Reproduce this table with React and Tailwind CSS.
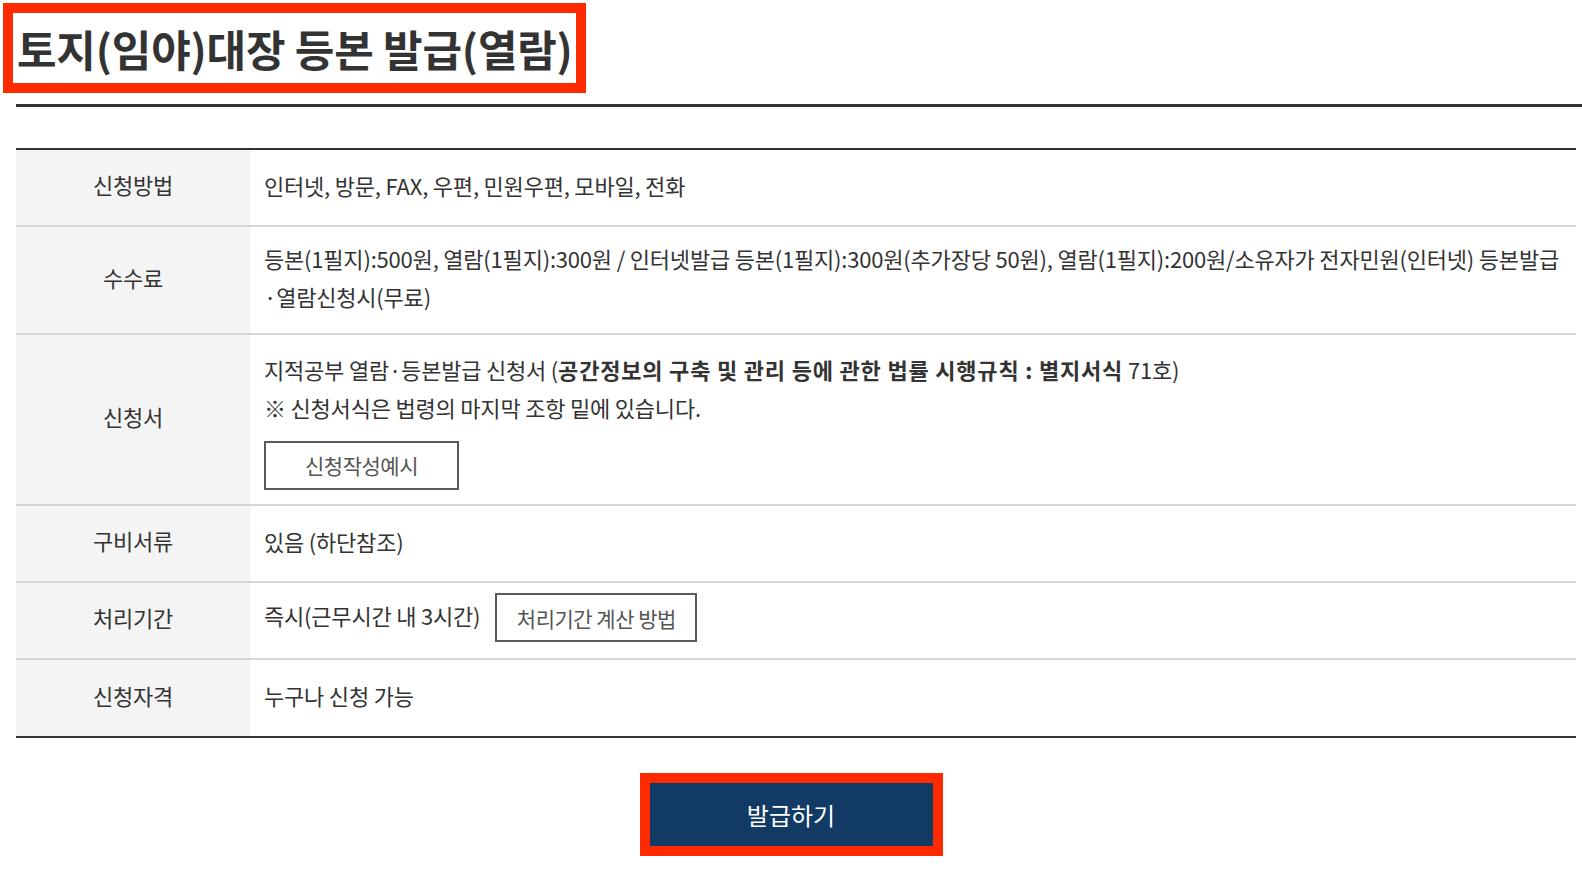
import React from "react";

function Row({ label, h, children, last, pb = "pb-[6px]" }) {
  return (
    <div className={`flex ${h} ${last ? "" : "border-b-2 border-[#d6d6d6]"}`}>
      <div className="w-[234px] shrink-0 bg-[#f4f4f4] flex items-center justify-center pb-[6px] text-[22px] tracking-[-0.2px] text-[#333]">
        {label}
      </div>
      <div className={`flex-1 pl-[14px] ${pb} flex flex-col justify-center text-[22px] tracking-[-0.2px] leading-[38px] text-[#333]`}>
        {children}
      </div>
    </div>
  );
}

export default function App() {
  return (
    <div className="w-[1582px] min-h-[886px] bg-white font-['Noto_Sans_CJK_KR',sans-serif] text-[#333]">
      <div className="pt-[3px] pl-[3px]">
        <div className="w-[583px] h-[90px] border-[10px] border-[#ff2a00] flex items-center pl-[4px]">
          <h1 className="text-[43px] font-bold tracking-[-0.2px] leading-none whitespace-nowrap text-[#333]">
            토지(임야)대장 등본 발급(열람)
          </h1>
        </div>
      </div>
      <div className="mt-[11px] ml-[16px] h-[3px] bg-[#333]" />
      <div className="mt-[41px] ml-[16px] w-[1560px] border-t-2 border-b-2 border-[#333]">
        <Row label="신청방법" h="h-[77px]">
          <div className="whitespace-nowrap">인터넷, 방문, FAX, 우편, 민원우편, 모바일, 전화</div>
        </Row>
        <Row label="수수료" h="h-[108px]">
          <div className="whitespace-nowrap">
            등본(1필지):500원, 열람(1필지):300원 / 인터넷발급 등본(1필지):300원(추가장당 50원), 열람(1필지):200원/소유자가 전자민원(인터넷) 등본발급
          </div>
          <div className="whitespace-nowrap">·열람신청시(무료)</div>
        </Row>
        <Row label="신청서" h="h-[171px]" pb="pb-0">
          <div className="whitespace-nowrap">
            지적공부 열람·등본발급 신청서 (
            <span className="font-bold tracking-[0.8px]">공간정보의 구축 및 관리 등에 관한 법률 시행규칙 : 별지서식</span> 71호)
          </div>
          <div className="whitespace-nowrap">※ 신청서식은 법령의 마지막 조항 밑에 있습니다.</div>
          <div className="mt-[15px]">
            <button className="w-[195px] h-[49px] border-2 border-[#5a5a5a] bg-white text-[21px] tracking-[-0.5px] text-[#555] flex items-center justify-center">
              신청작성예시
            </button>
          </div>
        </Row>
        <Row label="구비서류" h="h-[77px]">
          <div className="whitespace-nowrap">있음 (하단참조)</div>
        </Row>
        <Row label="처리기간" h="h-[77px]">
          <div className="flex items-center gap-[15px]">
            <span className="whitespace-nowrap -mt-[6px]">즉시(근무시간 내 3시간)</span>
            <button className="w-[202px] h-[49px] border-2 border-[#5a5a5a] bg-white text-[21px] tracking-[-0.5px] text-[#555] flex items-center justify-center whitespace-nowrap">
              처리기간 계산 방법
            </button>
          </div>
        </Row>
        <Row label="신청자격" h="h-[76px]" last>
          <div className="whitespace-nowrap">누구나 신청 가능</div>
        </Row>
      </div>
      <div className="mt-[35px] flex justify-center">
        <div className="border-[10px] border-[#ff2a00]">
          <button className="w-[283px] h-[63px] bg-[#113a64] text-white text-[24px] flex items-center justify-center">
            발급하기
          </button>
        </div>
      </div>
    </div>
  );
}
